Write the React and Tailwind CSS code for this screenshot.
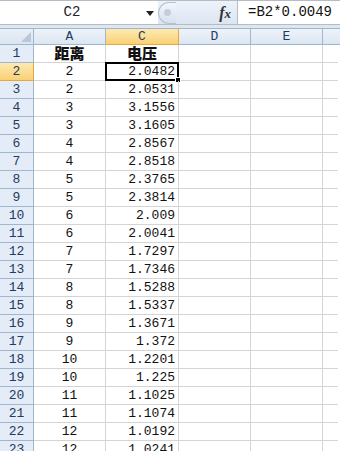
import React from "react";

const rows = [
  ["距离", "电压"],
  ["2", "2.0482"],
  ["2", "2.0531"],
  ["3", "3.1556"],
  ["3", "3.1605"],
  ["4", "2.8567"],
  ["4", "2.8518"],
  ["5", "2.3765"],
  ["5", "2.3814"],
  ["6", "2.009"],
  ["6", "2.0041"],
  ["7", "1.7297"],
  ["7", "1.7346"],
  ["8", "1.5288"],
  ["8", "1.5337"],
  ["9", "1.3671"],
  ["9", "1.372"],
  ["10", "1.2201"],
  ["10", "1.225"],
  ["11", "1.1025"],
  ["11", "1.1074"],
  ["12", "1.0192"],
  ["12", "1.0241"],
];

const mono = { fontFamily: '"Liberation Mono", "DejaVu Sans Mono", monospace' };
const cjk = { fontFamily: '"Noto Sans CJK SC", "Noto Sans", sans-serif' };

function FormulaBar() {
  return (
    <div className="flex h-[25px] border-t border-b border-[#b6bcc6] bg-white" style={mono}>
      <div className="relative flex w-[158px] items-center justify-center pr-[14px] text-[14px] text-[#222]">
        C2
        <svg className="absolute right-[4px] top-[10px]" width="8" height="5" viewBox="0 0 8 5">
          <path d="M0 0h8L4 5z" fill="#222" />
        </svg>
      </div>
      <div className="flex w-[80px] items-center border-r border-[#b6bcc6] bg-gradient-to-b from-[#eef3fa] to-[#dbe5f2]">
        <div className="flex h-[22px] w-[18px] items-center justify-center rounded-l-full border border-r-0 border-[#b3c1d4] bg-gradient-to-b from-[#f4f7fb] to-[#d6e0ee]">
          <div className="h-[7px] w-[7px] rounded-full bg-[#c4cfdd]" />
        </div>
        <div className="flex-1" />
        <span
          className="mr-[6px] text-[16px] font-bold italic text-[#333]"
          style={{ fontFamily: '"Liberation Serif", serif' }}
        >
          f<span className="text-[13px]">x</span>
        </span>
      </div>
      <div className="flex flex-1 items-center pl-[10px] text-[14px] text-[#111]">=B2*0.0049</div>
    </div>
  );
}

function Header() {
  const cols = [
    ["A", "w-[72px]", false],
    ["C", "w-[73px]", true],
    ["D", "w-[72px]", false],
    ["E", "w-[72px]", false],
  ];
  return (
    <div className="flex h-[17px] border-t border-[#9eb6ce] text-[13px] text-[#1f3b62]" style={mono}>
      <div className="relative w-[34px] border-r border-b border-[#9eb6ce] bg-gradient-to-b from-[#e9eff7] to-[#dbe5f1]">
        <svg className="absolute bottom-[2px] right-[2px]" width="10" height="10" viewBox="0 0 10 10">
          <path d="M10 0v10H0z" fill="#b8c7da" />
        </svg>
      </div>
      {cols.map(([c, w, sel]) => (
        <div
          key={c}
          className={`${w} flex items-center justify-center border-r border-b ${
            sel
              ? "border-[#e8a73c] bg-gradient-to-b from-[#fdeab0] to-[#f9d075]"
              : "border-[#9eb6ce] bg-gradient-to-b from-[#eef3f9] to-[#dce6f2]"
          }`}
        >
          {c}
        </div>
      ))}
      <div className="flex-1 border-b border-[#9eb6ce] bg-gradient-to-b from-[#eef3f9] to-[#dce6f2]" />
    </div>
  );
}

export default function App() {
  return (
    <div className="h-[451px] w-[340px] overflow-hidden bg-white">
      <FormulaBar />
      <div className="h-[3px] bg-[#dfe6ef]" />
      <Header />
      {rows.map(([a, c], i) => {
        const n = i + 1;
        const first = n === 1;
        const sel = n === 2;
        return (
          <div key={n} className="flex h-[18px] text-[13px] text-[#111]">
            <div
              className={`flex w-[34px] items-center justify-center border-r border-b text-[#1f3b62] ${
                sel
                  ? "border-[#e8a73c] bg-gradient-to-b from-[#fdeab0] to-[#f9d075]"
                  : "border-[#9eb6ce] bg-[#e4ecf7]"
              }`}
              style={mono}
            >
              {n}
            </div>
            <div
              className={`flex w-[72px] items-center justify-center border-r border-b border-[#d4d4d4] ${
                first ? "font-black text-[15px]" : ""
              }`}
              style={first ? cjk : mono}
            >
              {a}
            </div>
            <div
              className={`relative flex w-[73px] items-center border-r border-b border-[#d4d4d4] ${
                first ? "justify-center font-black text-[15px]" : "justify-end pr-[3px]"
              }`}
              style={first ? cjk : mono}
            >
              {c}
              {sel && (
                <div className="absolute -left-[1px] -top-[1px] h-[19px] w-[74px] border-2 border-black">
                  <div className="absolute -bottom-[4px] -right-[4px] h-[6px] w-[6px] border border-white bg-black" />
                </div>
              )}
            </div>
            <div className="w-[72px] border-r border-b border-[#d4d4d4]" />
            <div className="w-[72px] border-r border-b border-[#d4d4d4]" />
            <div className="flex-1 border-b border-[#d4d4d4] mr-[2px]" />
          </div>
        );
      })}
    </div>
  );
}
